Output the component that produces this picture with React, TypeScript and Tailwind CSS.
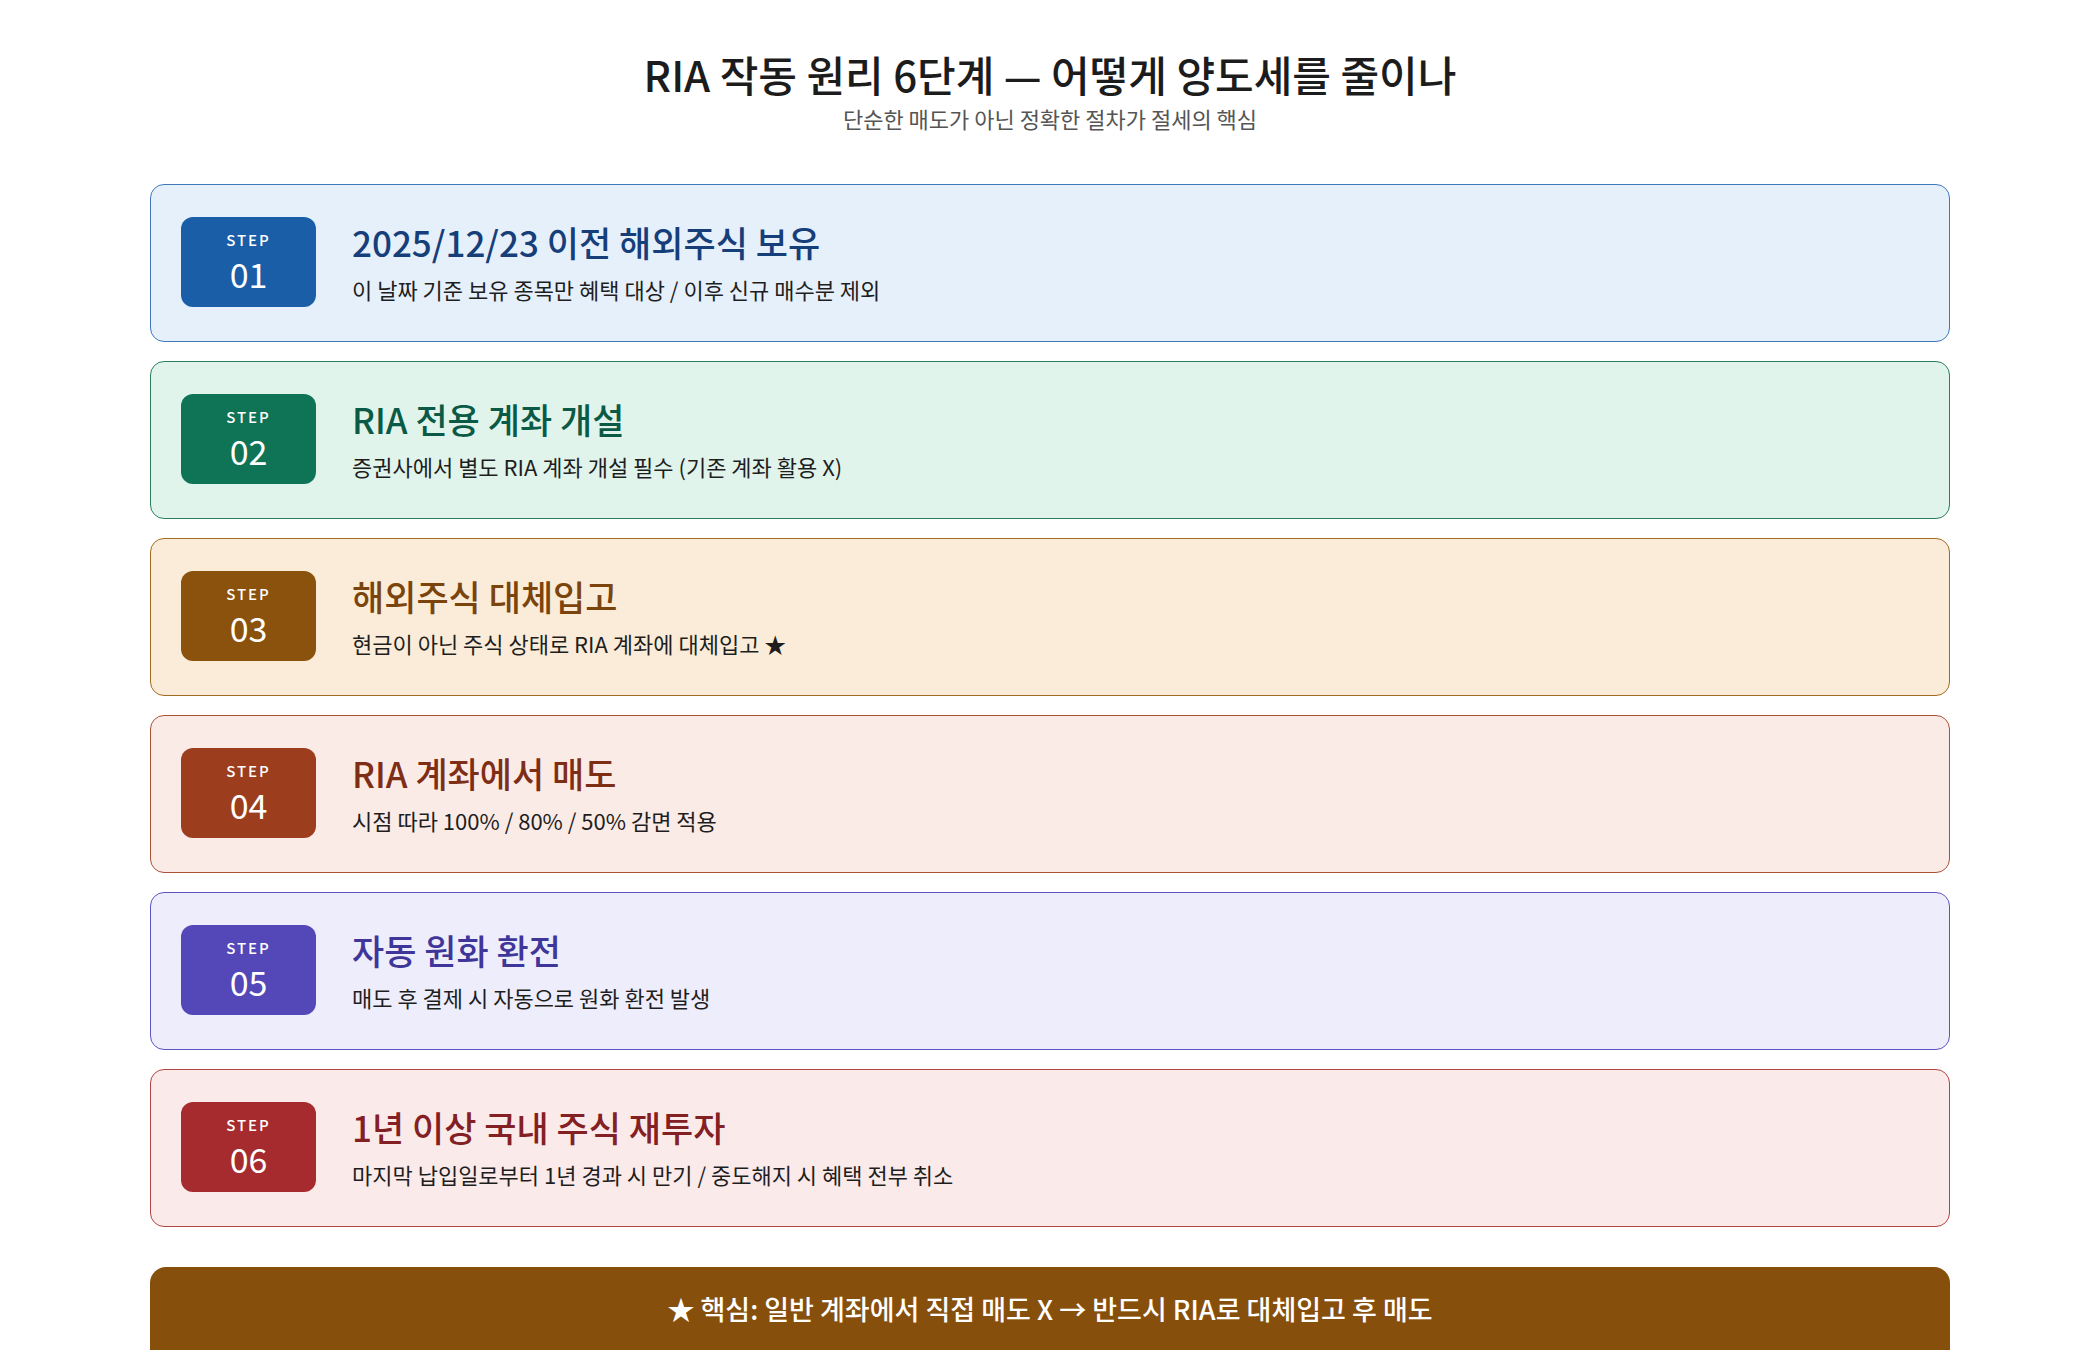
const steps = [
  {
    n: "01",
    title: "2025/12/23 이전 해외주식 보유",
    desc: "이 날짜 기준 보유 종목만 혜택 대상 / 이후 신규 매수분 제외",
    card: "bg-[#e6f0fb] border-[#3f78bd]",
    badge: "bg-[#1a5ea8]",
    head: "text-[#163f7a]",
  },
  {
    n: "02",
    title: "RIA 전용 계좌 개설",
    desc: "증권사에서 별도 RIA 계좌 개설 필수 (기존 계좌 활용 X)",
    card: "bg-[#e1f4ec] border-[#2a8060]",
    badge: "bg-[#0f7356]",
    head: "text-[#0b5a45]",
  },
  {
    n: "03",
    title: "해외주식 대체입고",
    desc: "현금이 아닌 주식 상태로 RIA 계좌에 대체입고 ★",
    card: "bg-[#faecd8] border-[#a36a22]",
    badge: "bg-[#8a520c]",
    head: "text-[#7a440c]",
  },
  {
    n: "04",
    title: "RIA 계좌에서 매도",
    desc: "시점 따라 100% / 80% / 50% 감면 적용",
    card: "bg-[#fbebe6] border-[#a85238]",
    badge: "bg-[#9c3d1e]",
    head: "text-[#7f2e16]",
  },
  {
    n: "05",
    title: "자동 원화 환전",
    desc: "매도 후 결제 시 자동으로 원화 환전 발생",
    card: "bg-[#eeedfc] border-[#5e53c2]",
    badge: "bg-[#5447b8]",
    head: "text-[#3f369a]",
  },
  {
    n: "06",
    title: "1년 이상 국내 주식 재투자",
    desc: "마지막 납입일로부터 1년 경과 시 만기 / 중도해지 시 혜택 전부 취소",
    card: "bg-[#fbeaea] border-[#b34444]",
    badge: "bg-[#a52b2e]",
    head: "text-[#832024]",
  },
];

export default function App() {
  return (
    <div
      className="min-h-screen bg-white pt-[46px] px-[150px] overflow-hidden h-[1350px]"
      style={{ fontFamily: '"Noto Sans CJK KR", "Noto Sans", sans-serif' }}
    >
      <h1 className="text-center text-[42px] leading-[56px] font-medium text-[#1c1c1c]">
        RIA 작동 원리 6단계 — 어떻게 양도세를 줄이나
      </h1>
      <p className="text-center text-[22px] leading-[32px] text-[#555] mt-[0px]">
        단순한 매도가 아닌 정확한 절차가 절세의 핵심
      </p>

      <div className="mt-[50px] flex flex-col gap-[19px]">
        {steps.map((s) => (
          <div
            key={s.n}
            className={`h-[158px] rounded-[14px] border-[1.5px] px-[30px] pt-[32px] flex gap-[36px] ${s.card}`}
          >
            <div
              className={`w-[135px] h-[90px] rounded-[12px] shrink-0 flex flex-col items-center justify-center text-white ${s.badge}`}
            >
              <span className="text-[15px] leading-[20px] tracking-[2px] font-medium">STEP</span>
              <span className="text-[34px] leading-[40px] mt-[4px]">{s.n}</span>
            </div>
            <div className="flex flex-col pt-[2px]">
              <h2 className={`text-[35px] leading-[46px] font-medium ${s.head}`}>{s.title}</h2>
              <p className="text-[22px] leading-[32px] text-[#1e1e1e] mt-[8px]">{s.desc}</p>
            </div>
          </div>
        ))}
      </div>

      <div className="mt-[40px] h-[110px] rounded-t-[16px] bg-[#874f0c] text-white text-center text-[27px] pt-[22px] font-medium">
        ★ 핵심: 일반 계좌에서 직접 매도 X → 반드시 RIA로 대체입고 후 매도
      </div>
    </div>
  );
}
